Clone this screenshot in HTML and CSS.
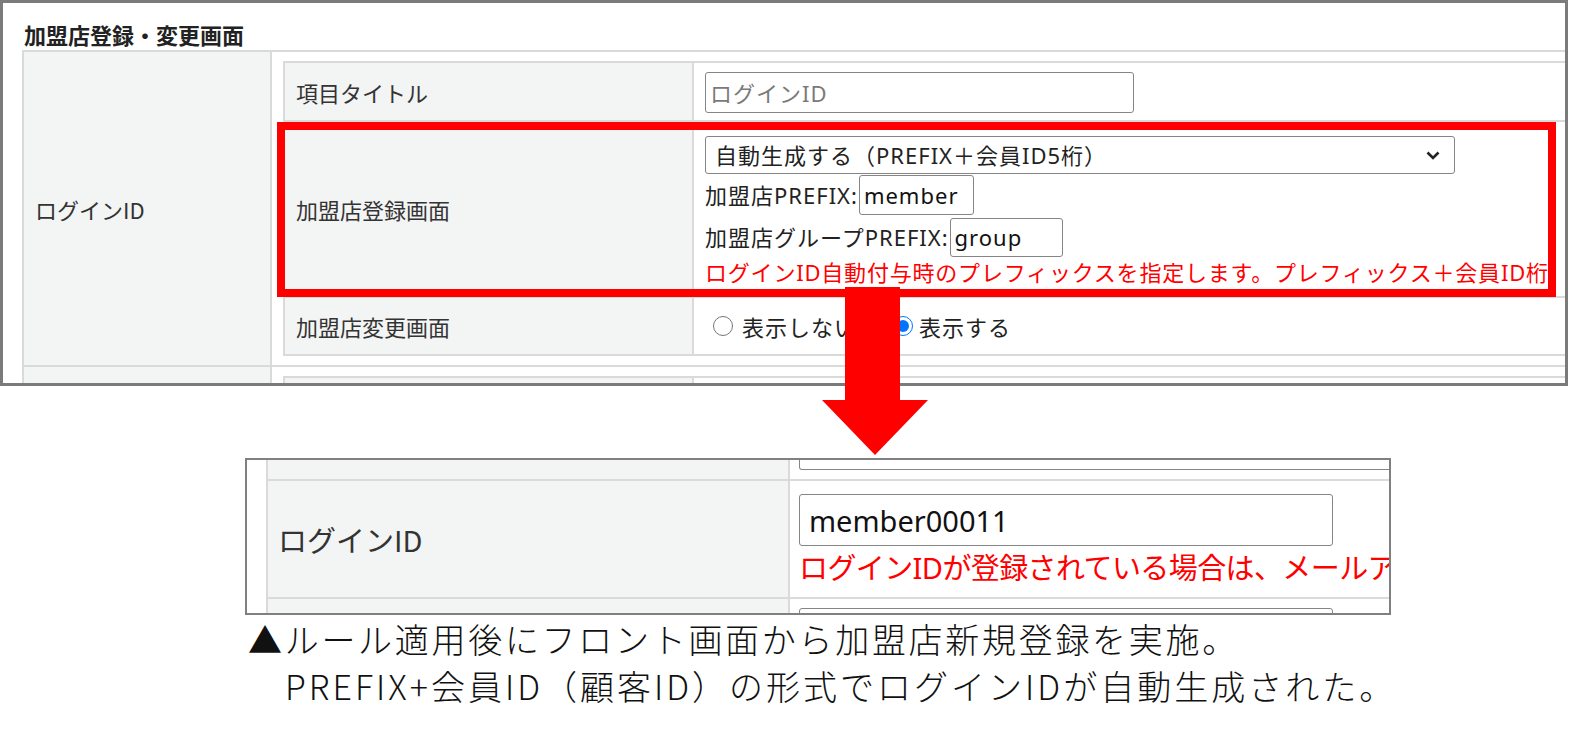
FILE: index.html
```html
<!DOCTYPE html>
<html lang="ja">

<head>
    <meta charset="UTF-8">
    <meta name="viewport" content="width=device-width, initial-scale=1.0">
    <title>加盟店登録・変更画面</title>

    <link rel="stylesheet" href="styles.css">

</head>

<body>

    <div class="page">

        <!-- 管理画面のキャプチャ -->
        <div class="shot shot-top">
            <div class="shot-title">加盟店登録・変更画面</div>

            <div class="outer">
                <div class="o-row">
                    <div class="o-label">ログインID</div>
                    <div class="o-value">
                        <div class="inner">
                            <div class="i-row">
                                <div class="i-label">項目タイトル</div>
                                <div class="i-value row-title">
                                    <input class="txt txt-title" type="text" placeholder="ログインID">
                                </div>
                            </div>
                            <div class="i-row">
                                <div class="i-label">加盟店登録画面</div>
                                <div class="i-value row-regist">
                                    <div class="sel">
                                        <span>自動生成する（PREFIX＋会員ID5桁）</span>
                                        <svg class="chev" width="14" height="9" viewBox="0 0 14 9">
                                            <path d="M1.5 1.5 L7 7 L12.5 1.5" fill="none" stroke="#222" stroke-width="2.6" />
                                        </svg>
                                    </div>
                                    <div class="pref-line">加盟店PREFIX:<input class="txt txt-member" type="text" value="member"></div>
                                    <div class="pref-line pref-group">加盟店グループPREFIX:<input class="txt txt-group" type="text" value="group"></div>
                                    <div class="note">ログインID自動付与時のプレフィックスを指定します。プレフィックス＋会員ID桁</div>
                                </div>
                            </div>
                            <div class="i-row">
                                <div class="i-label">加盟店変更画面</div>
                                <div class="i-value row-radio">
                                    <label class="rd"><input type="radio" name="disp">表示しない</label>
                                    <label class="rd rd-on"><input type="radio" name="disp" checked>表示する</label>
                                </div>
                            </div>
                        </div>
                    </div>
                </div>
                <div class="o-row">
                    <div class="o-label"></div>
                    <div class="o-value">
                        <div class="inner">
                            <div class="i-row">
                                <div class="i-label"></div>
                                <div class="i-value"></div>
                            </div>
                        </div>
                    </div>
                </div>
            </div>

            <div class="redbox"></div>
        </div>

        <svg class="arrow" width="106" height="168" viewBox="0 0 106 168">
            <polygon points="23,0 78,0 78,113 106,113 53,168 0,113 23,113" fill="#ff0000" />
        </svg>

        <!-- フロント画面のキャプチャ -->
        <div class="shot shot-bottom">
            <div class="b-table">
                <div class="b-row b-row-top">
                    <div class="b-label"></div>
                    <div class="b-value"><div class="b-cut"></div></div>
                </div>
                <div class="b-row b-row-main">
                    <div class="b-label">ログインID</div>
                    <div class="b-value">
                        <input class="txt txt-login" type="text" value="member00011">
                        <div class="b-note">ログインIDが登録されている場合は、メールア</div>
                    </div>
                </div>
                <div class="b-row b-row-next">
                    <div class="b-label"></div>
                    <div class="b-value"><div class="b-next"></div></div>
                </div>
            </div>
        </div>

        <div class="caption">
            <div>▲ルール適用後にフロント画面から加盟店新規登録を実施。</div>
            <div class="caption-2">PREFIX+会員ID（顧客ID）の形式でログインIDが自動生成された。</div>
        </div>

    </div>

</body>

</html>
```

FILE: styles.css
```css
* {
    box-sizing: border-box;
}

body {
    margin: 0;
    background-color: #fff;
    font-family: "Noto Sans CJK JP", sans-serif;
    color: #333;
}

.page {
    position: relative;
    width: 1591px;
    height: 745px;
}

.shot {
    overflow: hidden;
    background-color: #fff;
}

/* 上のキャプチャ */
.shot-top {
    position: relative;
    width: 1568px;
    height: 386px;
    border: 3px solid #7b7b7b;
}

.shot-title {
    height: 47px;
    padding: 16px 0 0 21px;
    font-size: 22px;
    line-height: 30px;
    font-weight: 700;
    color: #222;
}

.outer {
    margin-left: 19px;
    width: 1546px;
    border-top: 2px solid #dadada;
    border-left: 2px solid #dadada;
}

.o-row {
    display: grid;
    grid-template-columns: 248px 1fr;
    border-bottom: 2px solid #dadada;
}

.o-label {
    display: flex;
    align-items: center;
    padding-left: 11px;
    background-color: #f3f4f4;
    border-right: 2px solid #dadada;
    font-size: 22px;
    line-height: 30px;
}

.o-value {
    min-width: 0;
    padding: 9px 0 9px 11px;
}

.inner {
    border-top: 2px solid #dadada;
    border-left: 2px solid #dadada;
}

.i-row {
    display: grid;
    grid-template-columns: 409px 1fr;
    border-bottom: 2px solid #dadada;
}

.i-label {
    display: flex;
    align-items: center;
    padding-left: 11px;
    background-color: #f3f4f4;
    border-right: 2px solid #dadada;
    font-size: 22px;
    line-height: 30px;
    min-height: 56px;
}

.i-value {
    min-width: 0;
    overflow: hidden;
    padding-left: 11px;
    font-family: "Noto Sans", "Noto Sans CJK JP", sans-serif;
    font-size: 22px;
    letter-spacing: 1px;
    color: #222;
}

.txt {
    display: block;
    margin: 0;
    padding: 0 4px;
    border: 1px solid #858585;
    border-radius: 3px;
    background-color: #fff;
    font-family: "Noto Sans", "Noto Sans CJK JP", sans-serif;
    font-size: 22px;
    letter-spacing: 1px;
    color: #111;
}

.txt::placeholder {
    color: #7a7a7a;
}

.row-title {
    padding-top: 9px;
    padding-bottom: 7px;
}

.txt-title {
    width: 429px;
    height: 41px;
}

.row-regist {
    padding-top: 14px;
    padding-bottom: 11px;
}

.sel {
    display: flex;
    align-items: center;
    justify-content: space-between;
    width: 750px;
    height: 38px;
    padding: 0 14px 0 9px;
    border: 1px solid #858585;
    border-radius: 3px;
    line-height: 36px;
}

.pref-line {
    display: flex;
    align-items: center;
    margin-top: 1px;
    line-height: 40px;
    white-space: nowrap;
}

.pref-group {
    margin-top: 2px;
}

.txt-member {
    width: 115px;
    height: 40px;
    margin-left: 1px;
}

.txt-group {
    width: 113px;
    height: 39px;
    margin-left: 1px;
}

.note {
    margin-top: 2px;
    line-height: 26px;
    letter-spacing: 0.8px;
    color: #ff0000;
    white-space: nowrap;
}

.row-radio {
    display: flex;
    align-items: center;
    gap: 36px;
    padding-left: 19px;
    min-height: 56px;
}

.rd {
    display: flex;
    align-items: center;
    gap: 9px;
}

.rd-on {
    gap: 6px;
}

.rd input {
    width: 20px;
    height: 20px;
    margin: 0;
}

.redbox {
    position: absolute;
    left: 274px;
    top: 119px;
    width: 1279px;
    height: 175px;
    border: 8px solid #ff0000;
}

.arrow {
    position: absolute;
    left: 822px;
    top: 287px;
    z-index: 2;
}

/* 下のキャプチャ */
.shot-bottom {
    width: 1146px;
    height: 157px;
    margin: 72px 0 0 245px;
    padding-left: 19px;
    border: 2px solid #808080;
}

.b-table {
    width: 1200px;
    border-left: 2px solid #dadada;
}

.b-row {
    display: grid;
    grid-template-columns: 522px 1fr;
    border-bottom: 2px solid #dadada;
}

.b-label {
    display: flex;
    align-items: center;
    padding-left: 10px;
    background-color: #f3f4f4;
    border-right: 2px solid #dadada;
    font-size: 29px;
    line-height: 36px;
}

.b-value {
    padding-left: 9px;
    font-family: "Noto Sans", "Noto Sans CJK JP", sans-serif;
    font-size: 29px;
}

.b-row-top {
    height: 21px;
}

.b-cut {
    width: 700px;
    height: 10px;
    border: 1px solid #858585;
    border-top: 0;
    border-radius: 0 0 3px 3px;
}

.b-row-main {
    height: 118px;
}

.b-row-main .b-value {
    padding-top: 13px;
}

.txt-login {
    width: 534px;
    height: 52px;
    padding: 0 9px;
    font-size: 29px;
    letter-spacing: 0;
}

.b-note {
    margin-top: 5px;
    line-height: 34px;
    letter-spacing: -0.6px;
    color: #ff0000;
    white-space: nowrap;
}

.b-row-next .b-value {
    padding-top: 9px;
}

.b-next {
    width: 534px;
    height: 30px;
    border: 1px solid #858585;
    border-radius: 3px;
}

.caption {
    margin: 0 0 0 248px;
    font-family: "Noto Sans CJK JP Light", "Noto Sans CJK JP DemiLight", "Noto Sans CJK JP", sans-serif;
    font-size: 34px;
    line-height: 47px;
    font-weight: 300;
    letter-spacing: 2.7px;
    color: #111;
}

.caption-2 {
    padding-left: 37px;
    letter-spacing: 3px;
}
```
